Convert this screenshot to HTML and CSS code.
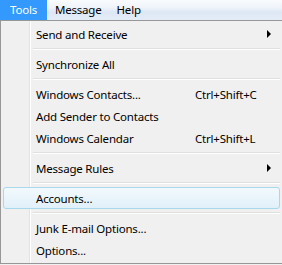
FILE: index.html
```html
<!DOCTYPE html>
<html lang="en">
<head>
    <meta charset="UTF-8">
    <title>Tools menu</title>
    <link rel="stylesheet" href="styles.css">
</head>
<body>
    <div class="menubar">
        <span class="menubar-item open">Tools</span>
        <span class="menubar-item">Message</span>
        <span class="menubar-item">Help</span>
    </div>
    <div class="menu">
        <div class="item"><span>Send and Receive</span><span class="arrow"></span></div>
        <div class="sep"></div>
        <div class="item"><span>Synchronize All</span></div>
        <div class="sep"></div>
        <div class="item"><span>Windows Contacts...</span><span class="shortcut">Ctrl+Shift+C</span></div>
        <div class="item"><span>Add Sender to Contacts</span></div>
        <div class="item"><span>Windows Calendar</span><span class="shortcut">Ctrl+Shift+L</span></div>
        <div class="sep"></div>
        <div class="item"><span>Message Rules</span><span class="arrow"></span></div>
        <div class="sep"></div>
        <div class="item hover"><span>Accounts...</span></div>
        <div class="sep"></div>
        <div class="item"><span>Junk E-mail Options...</span></div>
        <div class="item"><span>Options...</span></div>
    </div>
</body>
</html>
```

FILE: styles.css
```css
body {
    margin: 0;
    font-family: "Noto Sans", sans-serif;
    font-size: 11.5px;
    letter-spacing: -0.2px;
    color: #000;
    background-color: #f0f0f0;
}

.menubar {
    display: flex;
    height: 20px;
    background: linear-gradient(#f9fbfe 0%, #eef3fa 40%, #dde7f4 60%, #e4ecf7 100%);
}

.menubar-item {
    display: flex;
    align-items: center;
    padding: 0 7px 0 8px;
    line-height: 20px;
}

.menubar-item.open {
    background-color: #3399ff;
    color: #fff;
    padding: 0 10px 0 10px;
}

.menu {
    width: 279px;
    border: 1px solid #979797;
    padding: 2px 0 2px 2px;
    background-color: #f0f0f0;
    background-image: linear-gradient(90deg, transparent 28px, #e2e3e3 28px, #e2e3e3 29px, #fff 29px, #fff 30px, transparent 30px);
    background-clip: padding-box;
}

.item {
    display: flex;
    align-items: center;
    height: 22px;
    padding: 0 8px 0 32px;
    margin-right: 2px;
    border: 1px solid transparent;
    border-radius: 3px;
    box-sizing: border-box;
}

.item.hover {
    border-color: #a8d8eb;
    background: linear-gradient(#f2f9fd, #e1f0fa);
}

.shortcut {
    margin-left: auto;
    width: 76px;
}

.arrow {
    margin-left: auto;
    width: 0;
    height: 0;
    border-top: 4px solid transparent;
    border-bottom: 4px solid transparent;
    border-left: 4px solid #000;
}

.sep {
    height: 8px;
    margin-left: 30px;
    margin-right: 2px;
    background: linear-gradient(transparent 3px, #e0e0e0 3px, #e0e0e0 4px, #fff 4px, #fff 5px, transparent 5px);
}
```
